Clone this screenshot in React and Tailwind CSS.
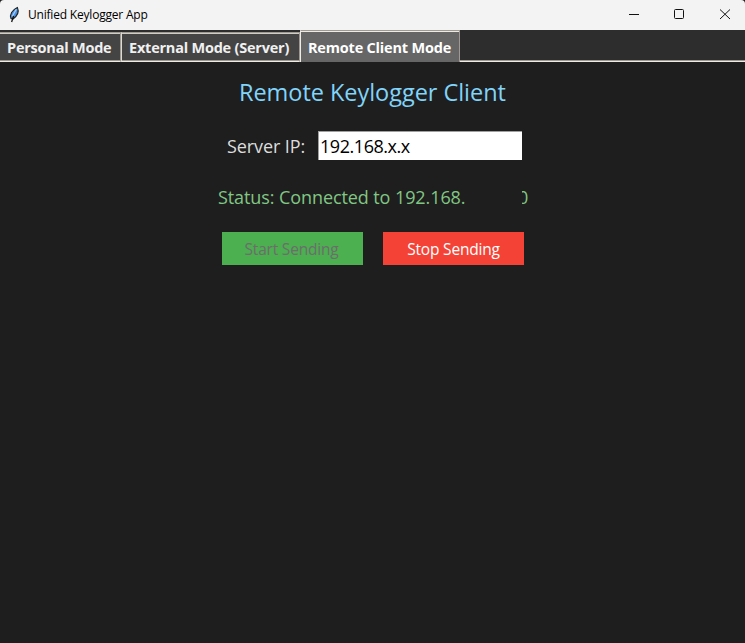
import React from "react";

function Feather() {
  return (
    <svg width="16" height="18" viewBox="0 0 16 18" className="ml-[6px] shrink-0">
      <path d="M5 12.5 C3.4 8.5 6 4 11.4 1.4 C13 5 11.8 9.5 7 13 Z" fill="#4a90e2" stroke="#222" strokeWidth="1.1" />
      <path d="M10.3 3.2 L6.2 10.5" stroke="#a9d0fb" strokeWidth="1.2" />
      <path d="M7.6 10 L5.6 16" fill="none" stroke="#111" strokeWidth="1.3" />
    </svg>
  );
}

function TitleBar() {
  return (
    <header className="flex h-[30px] items-center rounded-t-[4px] bg-[#f3f3f3] text-black">
      <Feather />
      <span className="ml-[6px] text-[12px] leading-[30px] tracking-[-0.2px]">Unified Keylogger App</span>
      <div className="ml-auto flex h-full items-center">
        <svg width="136" height="30" viewBox="0 0 136 30" fill="none" stroke="#111" strokeWidth="1">
          <path d="M20 14.5H30" />
          <rect x="65.5" y="9.5" width="9" height="9" rx="1" />
          <path d="M111 9.5L121 19M121 9.5L111 19" />
        </svg>
      </div>
    </header>
  );
}

function Tabs() {
  return (
    <nav className="flex h-[32px] items-end bg-[#2d2d2d] text-[14.5px] font-bold whitespace-nowrap text-[#f0f0f0]">
      <div className="h-[30px] w-[121px] border-t border-r border-b border-t-[#9e9a91] border-r-[#9e9a91] border-b-[#eeebe7] bg-[#444]">
        <div className="h-[28px] border-t border-b border-t-[#cfccc6] border-b-[#9e9a91] pl-[7px] leading-[27px] tracking-[-0.22px]">Personal Mode</div>
      </div>
      <div className="h-[30px] w-[179px] border-t border-r border-b border-l border-t-[#9e9a91] border-r-[#9e9a91] border-b-[#eeebe7] border-l-[#dcdad5] bg-[#444]">
        <div className="h-[28px] border-t border-b border-t-[#cfccc6] border-b-[#9e9a91] pl-[7px] leading-[27px] tracking-[-0.22px]">External Mode (Server)</div>
      </div>
      <div className="h-[32px] w-[160px] border-t border-r border-l border-t-[#9e9a91] border-r-[#9e9a91] border-l-[#eeebe7] bg-[#666] text-white">
        <div className="h-[31px] border-t border-t-[#eeebe7] pl-[7px] leading-[31px] tracking-[-0.2px]">Remote Client Mode</div>
      </div>
      <div className="h-[2px] flex-1 border-t border-b border-t-[#9e9a91] border-b-[#eeebe7]" />
    </nav>
  );
}

export default function App() {
  return (
    <div className="flex h-[643px] w-[745px] flex-col overflow-hidden bg-[#1e1e1e] font-['Open_Sans','Noto_Sans',sans-serif]">
      <TitleBar />
      <Tabs />
      <main className="flex flex-col">
        <h1 className="mt-[13px] ml-[239px] h-[34px] text-[23.5px] leading-[34px] tracking-[-0.04px] whitespace-nowrap text-[#81d4fa]">Remote Keylogger Client</h1>
        <div className="mt-[22px] ml-[227px] flex h-[29px] items-center text-[18px] whitespace-nowrap">
          <span className="w-[91px] pt-[2px] leading-[29px] tracking-[-0.1px] text-[#ddd]">Server IP:</span>
          <div className="h-[29px] w-[204px] border-t border-l border-[#a0a0a0] bg-white pl-[1px] leading-[29px] tracking-[-0.45px] text-black">192.168.x.x</div>
        </div>
        <div className="mt-[23px] ml-[218px] flex h-[28px] text-[18px] leading-[28px] whitespace-nowrap text-[#81c784]">
          <span className="w-[300px] tracking-[-0.09px]">Status: Connected to 192.168.</span>
          <span className="relative">
            0
            <span className="absolute top-0 left-0 h-[28px] w-[4px] bg-[#1e1e1e]" />
          </span>
        </div>
        <div className="mt-[21px] ml-[222px] flex gap-[20px] text-[15.5px] leading-[35px] tracking-[-0.2px]">
          <div className="h-[33px] w-[141px] bg-[#4caf50] pr-[2px] text-center text-[#6d6d6d]">Start Sending</div>
          <div className="h-[33px] w-[141px] bg-[#f44336] text-center text-white">Stop Sending</div>
        </div>
      </main>
    </div>
  );
}
